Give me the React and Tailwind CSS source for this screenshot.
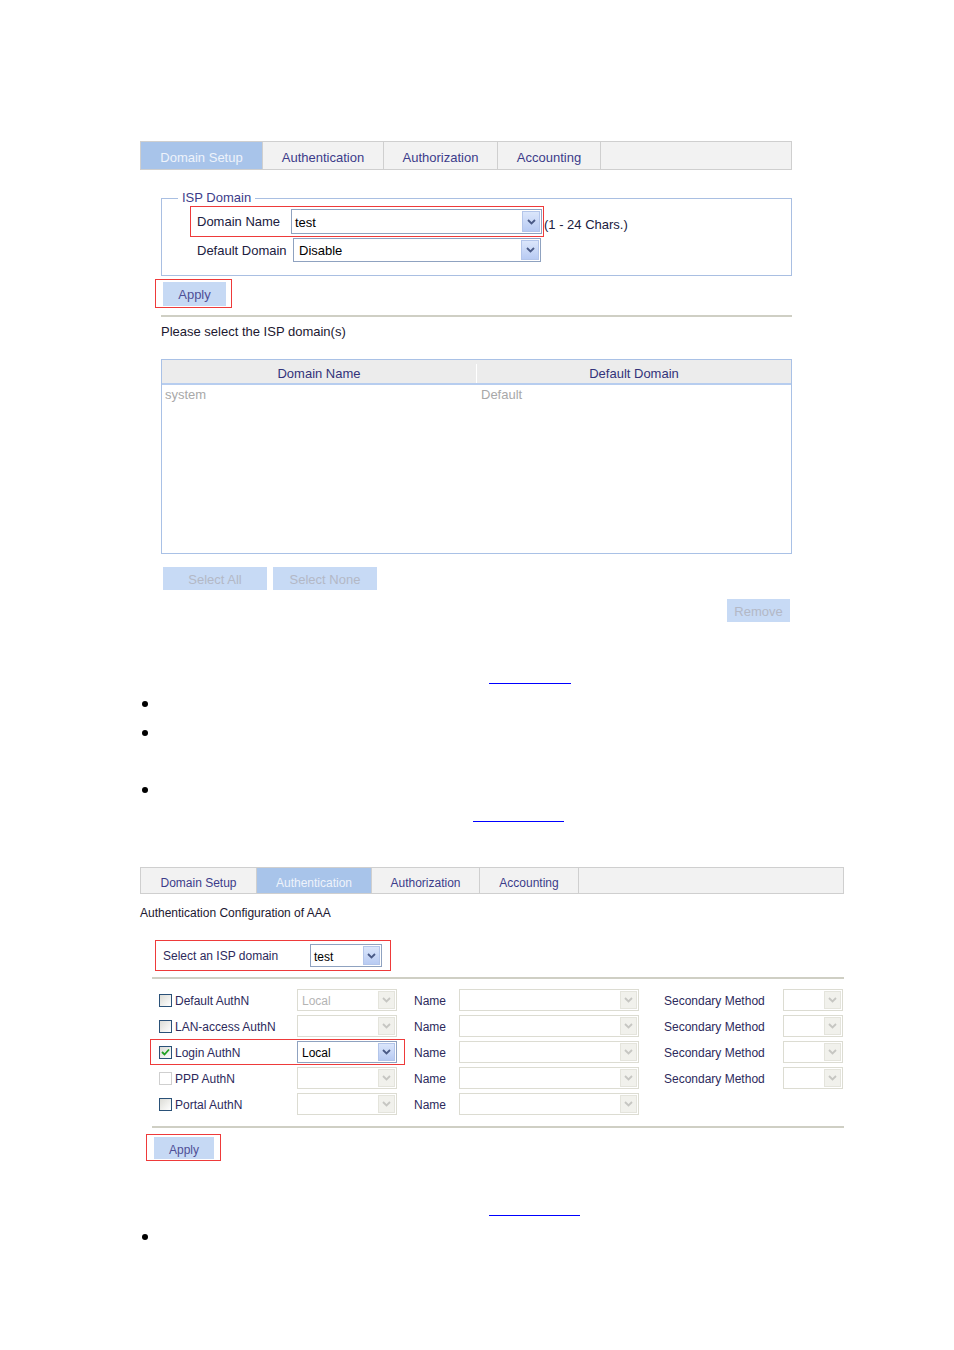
import React from 'react';

const Chevron = ({ disabled }) => (
  <svg width="9" height="6" viewBox="0 0 9 6">
    <path
      d="M1 1 L4.5 4.5 L8 1"
      fill="none"
      stroke={disabled ? '#c6c6c2' : '#4a5a86'}
      strokeWidth="1.8"
    />
  </svg>
);

const Select = ({ value, disabled, className, arrowClass = 'w-[17px]', textClass = '' }) => (
  <div
    className={`flex items-stretch bg-white border ${
      disabled ? 'border-[#dcdcd2]' : 'border-[#8fa2c0]'
    } ${className}`}
  >
    <span className={`flex-1 flex items-center pl-[3px] pt-[2px] ${disabled ? 'text-[#b4b4b4]' : 'text-black'} ${textClass}`}>
      {value}
    </span>
    <span
      className={`m-[1px] flex items-center justify-center border ${arrowClass} ${
        disabled
          ? 'bg-[#f1f1ec] border-[#e4e4dc]'
          : 'bg-gradient-to-b from-[#dbe6fb] to-[#b8cbf3] border-[#b3c5ea]'
      }`}
    >
      <Chevron disabled={disabled} />
    </span>
  </div>
);

const Tab = ({ label, active, className }) => (
  <div
    className={`flex items-center justify-center pt-[4px] border-r border-[#cfcfcf] ${className} ${
      active ? 'bg-[#a8c4ea] text-[#eef3fb]' : 'text-[#3c3c8a]'
    }`}
  >
    {label}
  </div>
);

const Checkbox = ({ checked, disabled }) => (
  <span
    className={`flex items-center justify-center w-[13px] h-[13px] border ${
      disabled
        ? 'border-[#cfcfcf] bg-white'
        : 'border-[#2a5178] bg-gradient-to-br from-[#dcdcd6] to-white'
    }`}
  >
    {checked && (
      <svg width="9" height="8" viewBox="0 0 9 8">
        <path d="M1 4 L3.5 6.5 L8 1.5" fill="none" stroke="#21a121" strokeWidth="1.8" />
      </svg>
    )}
  </span>
);

const Bullet = ({ className }) => <div className={`ml-[142px] w-[6px] h-[6px] rounded-full bg-black ${className}`} />;

const rows = [
  { label: 'Default AuthN', method: 'Local', second: true },
  { label: 'LAN-access AuthN', method: '', second: true },
  { label: 'Login AuthN', method: 'Local', checked: true, active: true, second: true },
  { label: 'PPP AuthN', method: '', disabledBox: true, second: true },
  { label: 'Portal AuthN', method: '' },
];

const App = () => {
  return (
    <div className="w-[954px] min-h-[1350px] bg-white font-['Liberation_Sans',Arial,sans-serif] flex flex-col pb-[100px]">
      {/* Domain setup */}
      <div className="mt-[141px] ml-[140px] w-[652px] flex flex-col">
        <div className="flex h-[29px] border border-[#cfcfcf] bg-[#f2f2f2] text-[13px]">
          <Tab label="Domain Setup" active className="w-[122px]" />
          <Tab label="Authentication" className="w-[121px]" />
          <Tab label="Authorization" className="w-[114px]" />
          <Tab label="Accounting" className="w-[103px]" />
        </div>

        <fieldset className="mt-[20px] ml-[21px] w-[631px] border border-[#a9bfe2] pb-[13px] text-[13px]">
          <legend className="ml-[16px] px-[4px] leading-[16px] text-[#3c3c8a]">ISP Domain</legend>
          <div className="flex items-center">
            <div className="ml-[28px] w-[354px] h-[31px] border border-[#ee3a3a] flex items-center pl-[6px]">
              <span className="w-[94px] pt-[1px] text-[#202040]">Domain Name</span>
              <Select value="test" className="w-[251px] h-[25px]" arrowClass="w-[18px]" />
            </div>
            <span className="mt-[6px] text-[#202040]">(1 - 24 Chars.)</span>
          </div>
          <div className="mt-[1px] ml-[35px] flex items-center">
            <span className="w-[96px] pt-[1px] text-[#202040]">Default Domain</span>
            <Select value="Disable" className="w-[248px] h-[24px]" arrowClass="w-[18px]" textClass="pl-[5px]" />
          </div>
        </fieldset>

        <div className="mt-[3px] ml-[15px] w-[77px] h-[29px] border border-[#ee3a3a] pt-[2px] pl-[7px]">
          <button className="w-[63px] h-[24px] pt-[2px] bg-[#c6d9f4] text-[13px] text-[#4f4f96]">Apply</button>
        </div>

        <div className="mt-[7px] ml-[21px] w-[631px] h-[2px] bg-[#cfcfc4]" />

        <p className="mt-[7px] ml-[21px] text-[13px] leading-[16px] text-[#1c1830]">Please select the ISP domain(s)</p>

        <div className="mt-[19px] ml-[21px] w-[631px] h-[195px] border border-[#a9c1e6] text-[13px]">
          <div className="flex h-[25px] pt-[4px] bg-[#ececec] border-b-2 border-[#b7cdef] text-[#33337a]">
            <div className="w-[315px] flex items-center justify-center border-r border-white">Domain Name</div>
            <div className="flex-1 flex items-center justify-center">Default Domain</div>
          </div>
          <div className="flex pt-[2px] leading-[16px] text-[#a8a8a8]">
            <div className="w-[315px] pl-[3px]">system</div>
            <div className="flex-1 pl-[4px]">Default</div>
          </div>
        </div>

        <div className="mt-[13px] ml-[23px] flex gap-[6px] text-[13px]">
          <button className="w-[104px] h-[23px] pt-[2px] bg-[#c7daf5] text-[#b3b8c6]">Select All</button>
          <button className="w-[104px] h-[23px] pt-[2px] bg-[#c7daf5] text-[#b3b8c6]">Select None</button>
        </div>

        <div className="mt-[9px] flex justify-end pr-[2px]">
          <button className="w-[63px] h-[23px] pt-[2px] bg-[#c7daf5] text-[13px] text-[#b3b8c6]">Remove</button>
        </div>
      </div>

      <div className="mt-[61px] ml-[489px] w-[82px] h-[1px] bg-[#0000ff]" />
      <Bullet className="mt-[17px]" />
      <Bullet className="mt-[23px]" />
      <Bullet className="mt-[51px]" />
      <div className="mt-[28px] ml-[473px] w-[91px] h-[1px] bg-[#0000ff]" />

      {/* Authentication */}
      <div className="mt-[45px] ml-[140px] w-[704px] flex flex-col text-[12px]">
        <div className="flex h-[27px] border border-[#cfcfcf] bg-[#f2f2f2]">
          <Tab label="Domain Setup" className="w-[116px]" />
          <Tab label="Authentication" active className="w-[115px]" />
          <Tab label="Authorization" className="w-[108px]" />
          <Tab label="Accounting" className="w-[99px]" />
        </div>

        <p className="mt-[12px] leading-[14px] text-[#1c1830]">Authentication Configuration of AAA</p>

        <div className="mt-[20px] ml-[15px] w-[236px] h-[31px] border border-[#ee3a3a] flex items-center pl-[7px]">
          <span className="w-[147px] pt-[1px] text-[#2d2a5c]">Select an ISP domain</span>
          <Select value="test" className="w-[72px] h-[23px]" arrowClass="w-[17px]" />
        </div>

        <div className="mt-[6px] ml-[12px] w-[692px] h-[2px] bg-[#cfcfc4]" />

        <div className="mt-[8px] flex flex-col">
          {rows.map((r) => (
            <div key={r.label} className="flex items-center h-[26px]">
              <div
                className={`ml-[10px] w-[255px] h-[26px] flex items-center pl-[8px] border ${
                  r.active ? 'border-[#ee3a3a]' : 'border-transparent'
                }`}
              >
                <Checkbox checked={r.checked} disabled={r.disabledBox} />
                <span className="ml-[3px] w-[122px] pt-[2px] text-[#2d2a5c]">{r.label}</span>
                <Select value={r.method} disabled={!r.active} className="w-[100px] h-[22px]" textClass="pl-[4px]" />
              </div>
              <span className="ml-[9px] w-[45px] pt-[1px] text-[#2d2a5c]">Name</span>
              <Select value="" disabled className="w-[180px] h-[22px]" />
              {r.second && (
                <>
                  <span className="ml-[25px] w-[119px] pt-[1px] text-[#2d2a5c]">Secondary Method</span>
                  <Select value="" disabled className="w-[60px] h-[22px]" />
                </>
              )}
            </div>
          ))}
        </div>

        <div className="mt-[9px] ml-[12px] w-[692px] h-[2px] bg-[#cfcfc4]" />

        <div className="mt-[6px] ml-[6px] w-[75px] h-[27px] border border-[#ee3a3a] pt-[2px] pl-[7px]">
          <button className="w-[60px] h-[22px] pt-[4px] bg-[#c6d9f4] text-[12px] leading-[14px] text-[#4f4f96]">Apply</button>
        </div>
      </div>

      <div className="mt-[54px] ml-[489px] w-[91px] h-[1px] bg-[#0000ff]" />
      <Bullet className="mt-[18px]" />
    </div>
  );
};

export default App;
